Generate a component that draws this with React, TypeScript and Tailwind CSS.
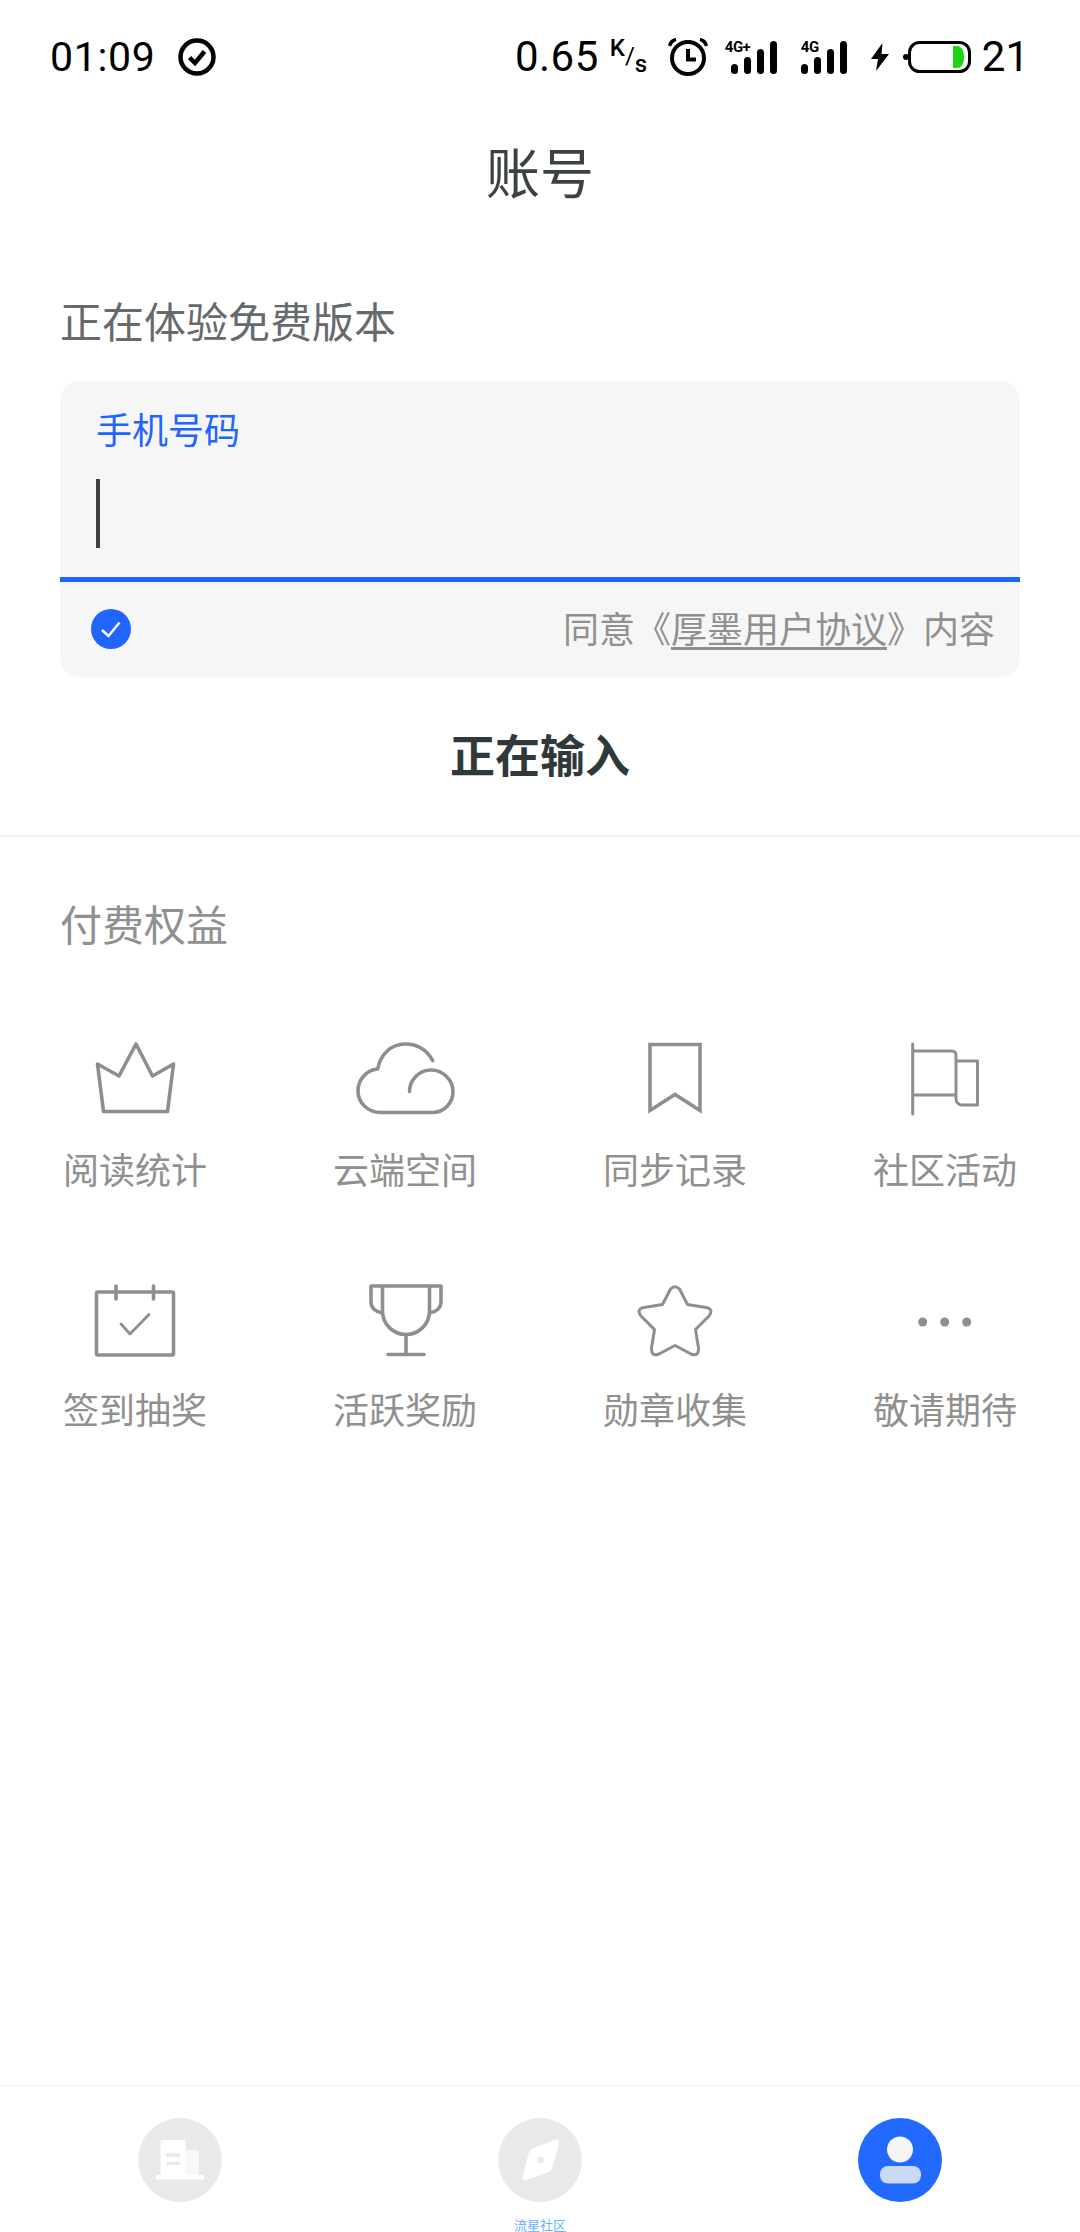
import React from 'react';

const iconStroke = '#8e8e8e';

const Bars: React.FC<{ label: string; wide?: boolean }> = ({ label, wide }) => (
  <div className={`flex h-[34px] flex-col items-start ${wide ? 'w-[52px]' : 'w-[46px]'}`}>
    <span className="h-[14px] text-[15px] leading-[14px] font-bold tracking-[-0.5px] text-black">{label}</span>
    <svg width="46" height="33" viewBox="0 0 46 33" className={`mt-[-13px] ${wide ? 'ml-[6px]' : ''}`}>
      <rect x="0" y="23" width="7" height="10" rx="3.5" fill="#000" />
      <rect x="13" y="16" width="7" height="17" rx="3.5" fill="#000" />
      <rect x="26" y="8" width="7" height="25" rx="3.5" fill="#000" />
      <rect x="39" y="0" width="7" height="33" rx="3.5" fill="#000" />
    </svg>
  </div>
);

const StatusBar: React.FC = () => (
  <div className="flex h-[114px] items-center justify-between pl-[50px] pr-[51px] text-black [font-family:Roboto,sans-serif]">
    <div className="flex items-center">
      <span className="text-[41px] leading-none font-normal tracking-[0.7px]">01:09</span>
      <svg width="40" height="40" viewBox="0 0 40 40" className="ml-[21px]">
        <circle cx="20" cy="20" r="16.5" fill="none" stroke="#000" strokeWidth="4.5" />
        <path d="M12.5 20.5 L18 26 L27.5 14.5" fill="none" stroke="#000" strokeWidth="4.5" />
      </svg>
    </div>
    <div className="flex items-center">
      <span className="text-[42px] leading-none font-normal tracking-[0.5px]">0.65</span>
      <div className="ml-[11px] flex h-[34px] w-[36px] items-start text-[24px] leading-none font-medium">
        <span className="mt-[-4px]">K</span>
        <span className="mt-[4px] font-normal">/</span>
        <span className="mt-[12px]">s</span>
      </div>
      <svg width="40" height="40" viewBox="0 0 40 40" className="ml-[22px]">
        <circle cx="20" cy="21" r="16" fill="none" stroke="#000" strokeWidth="4" />
        <path d="M20 12 V22.5 H28" fill="none" stroke="#000" strokeWidth="4" />
        <path d="M1.5 9 Q3 3.5 8 2.5 M38.5 9 Q37 3.5 32 2.5" fill="none" stroke="#000" strokeWidth="3.5" />
      </svg>
      <div className="ml-[17px]">
        <Bars label="4G+" wide />
      </div>
      <div className="ml-[24px]">
        <Bars label="4G" />
      </div>
      <svg width="20" height="28" viewBox="0 0 20 28" className="ml-[23px]">
        <path d="M12.5 0 L1 16 H8 L6 28 L19 11 H11.5 Z" fill="#000" />
      </svg>
      <svg width="68" height="32" viewBox="0 0 68 32" className="ml-[13px]">
        <circle cx="3" cy="16" r="3" fill="#000" />
        <rect x="6.5" y="1.5" width="60" height="29" rx="10" fill="none" stroke="#000" strokeWidth="3" />
        <path d="M50 5 H54 C59 5 61 10 61 16 C61 22 59 27 54 27 H50 Z" fill="#22d314" />
      </svg>
      <span className="ml-[11px] text-[42px] leading-none font-normal">21</span>
    </div>
  </div>
);

const icons: Record<string, React.ReactNode> = {
  crown: <path d="M51 3 L67.5 35 L88.5 23 L82.5 70.5 H18.5 L12.5 23 L34 35 Z" />,
  cloud: (
    <path d="M77.7 19.7 C72 9 62 3 50 3 C36 3 25 14 22.7 28 C11 29 3 39 3 50 C3 62 13 71.5 26 71.5 H77 C90 71.5 98 61 98 50.5 C98 39 88 29 76 29 C64 29 54.5 39 54.5 50.5" />
  ),
  bookmark: <path d="M25 3.5 H75 V69.5 L50 53.5 L25 69.5 Z" strokeLinejoin="miter" strokeLinecap="butt" />,
  flag: (
    <path
      d="M17.7 3 V73 M17.7 10 H57 A4 4 0 0 1 61 14 V58 A6 6 0 0 0 67 64 H82.5 V20 H61 M17.7 54 H61"
      strokeWidth="3"
    />
  ),
  calendar: (
    <g>
      <rect x="11.5" y="11" width="77" height="63" rx="1.5" />
      <path d="M31 5 V18 M68.5 5 V18" />
      <path d="M36 43 L45 53 L64 33.5" strokeWidth="2.8" />
    </g>
  ),
  trophy: (
    <path d="M16 5 H86 V21 C86 27 81 31 74.5 32 M16 5 V21 C16 27 21 31 27.5 32 M27.5 5 V30 C27.5 43 38 53.5 51 53.5 C64 53.5 74.5 43 74.5 30 V5 M51 53.5 V73.5 M33 73.5 H69" />
  ),
  star: (
    <path
      d="M45.5 8 Q50 3.5 54.5 8 L62.5 23.5 L81 26.5 Q89 28 84 35 L70.5 48.5 L73.5 67 Q74 76 66 73 L50 64.5 L34 73 Q26 76 26.5 67 L29.5 48.5 L16 35 Q11 28 19 26.5 L37.5 23.5 Z"
      strokeWidth="3"
    />
  ),
  more: (
    <g fill={iconStroke} stroke="none">
      <circle cx="27.7" cy="41" r="4.5" />
      <circle cx="49.7" cy="41" r="4.5" />
      <circle cx="71.7" cy="41" r="4.5" />
    </g>
  ),
};

const perks = [
  { label: '阅读统计', icon: 'crown' },
  { label: '云端空间', icon: 'cloud' },
  { label: '同步记录', icon: 'bookmark' },
  { label: '社区活动', icon: 'flag' },
  { label: '签到抽奖', icon: 'calendar' },
  { label: '活跃奖励', icon: 'trophy' },
  { label: '勋章收集', icon: 'star' },
  { label: '敬请期待', icon: 'more' },
];

const App: React.FC = () => {
  return (
    <div className="flex h-[2232px] w-[1080px] flex-col overflow-hidden bg-white [font-family:'Noto_Sans_CJK_SC',Roboto,sans-serif]">
      <StatusBar />

      <div className="flex h-[120px] items-start justify-center pt-[30px] text-[54px] leading-none text-[#3c4244]">账号</div>

      <div className="mt-[56px] mb-[2px] px-[60px] text-[42px] leading-[60px] text-[#666a6c]">正在体验免费版本</div>

      <div className="mx-[60px] mt-[29px] h-[296px] overflow-hidden rounded-[20px] bg-[#f6f6f6]">
        <div className="h-[196px] pl-[36px] pt-[27px]">
          <div className="text-[36px] leading-[40px] text-[#2264ff]">手机号码</div>
          <div className="mt-[31px] h-[69px] w-[4px] bg-[#3c4244]" />
        </div>
        <div className="h-[5px] bg-[#2264ff]" />
        <div className="flex h-[95px] items-center justify-between pl-[31px] pr-[25px]">
          <svg width="40" height="40" viewBox="0 0 40 40" className="mb-[2px]">
            <circle cx="20" cy="20" r="20" fill="#2264ff" />
            <path d="M11 21 L17.5 27 L28.5 13.5" fill="none" stroke="#fff" strokeWidth="2.5" />
          </svg>
          <div className="mb-[6px] text-[36px] leading-[44px] text-[#909090]">
            同意《<span className="underline underline-offset-[4px]">厚墨用户协议</span>》内容
          </div>
        </div>
      </div>

      <div className="flex h-[158px] items-start justify-center pt-[54px] text-[45px] leading-none font-bold text-[#30383a]">
        正在输入
      </div>
      <div className="h-[2px] bg-[#f1f1f1]" />

      <div className="mt-[56px] mb-[4px] px-[60px] text-[42px] leading-[60px] text-[#909090]">付费权益</div>

      <div className="mt-[84px] grid grid-cols-4 gap-y-[93px]">
        {perks.map((perk) => (
          <div key={perk.label} className="flex flex-col items-center">
            <svg
              width="100"
              height="76"
              viewBox="0 0 100 76"
              fill="none"
              stroke={iconStroke}
              strokeWidth="3.6"
              strokeLinejoin="round"
              strokeLinecap="round"
            >
              {icons[perk.icon]}
            </svg>
            <div className="mt-[31px] text-[36px] leading-[40px] text-[#909090]">{perk.label}</div>
          </div>
        ))}
      </div>

      <div className="mt-auto grid h-[147px] grid-cols-3 border-t-2 border-[#f6f6f6] pt-[31px]">
        <div className="flex flex-col items-center">
          <div className="flex h-[84px] w-[84px] items-center justify-center rounded-full bg-[#e9e9e9]">
            <svg width="84" height="84" viewBox="0 0 84 84">
              <rect x="22.5" y="22" width="25" height="36" rx="2" fill="#fff" />
              <rect x="47" y="32" width="14" height="26" rx="1.5" fill="#f8f8f8" />
              <rect x="18" y="57" width="48" height="4.5" rx="1.5" fill="#fff" />
              <rect x="28" y="35.3" width="14.5" height="3.4" rx="1.5" fill="#e9e9e9" />
              <rect x="28" y="43.7" width="14.5" height="3.4" rx="1.5" fill="#e9e9e9" />
            </svg>
          </div>
        </div>
        <div className="flex flex-col items-center">
          <div className="flex h-[84px] w-[84px] items-center justify-center rounded-full bg-[#e9e9e9]">
            <svg width="84" height="84" viewBox="0 0 84 84">
              <path
                d="M33 31 L57 22 Q62 21 61 26 L54 50 Q53 53 51 54 L28 62 Q24 63 25 58 L31 34 Q31.5 32 33 31 Z"
                fill="#fff"
              />
              <circle cx="42.4" cy="42" r="3.2" fill="#e9e9e9" />
            </svg>
          </div>
          <div className="mt-[17px] text-[13px] leading-[12px] text-[#6aaefc]">流星社区</div>
        </div>
        <div className="flex flex-col items-center">
          <div className="flex h-[84px] w-[84px] items-center justify-center rounded-full bg-[#2269ff]">
            <svg width="84" height="84" viewBox="0 0 84 84">
              <circle cx="42" cy="31.5" r="13" fill="#f5f5f5" />
              <rect x="22" y="48" width="41" height="17.5" rx="8" fill="#cbd9f6" />
            </svg>
          </div>
        </div>
      </div>
    </div>
  );
};

export default App;
